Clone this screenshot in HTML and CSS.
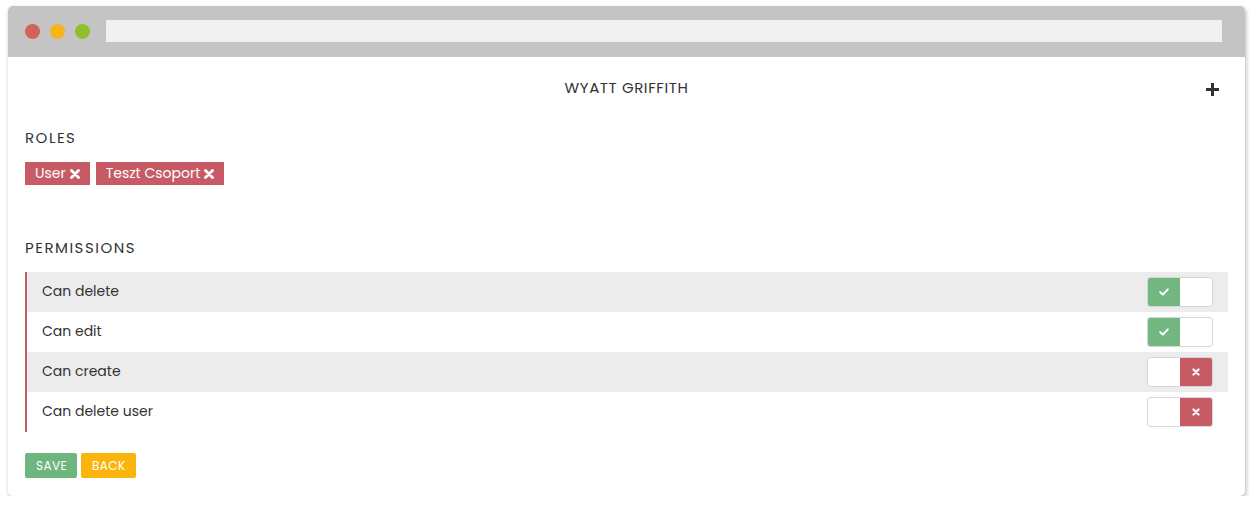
FILE: index.html
```html
<!DOCTYPE html>
<html>
<head>
<meta charset="utf-8">
<link rel="stylesheet" href="styles.css">
</head>
<body>
<div class="window">
  <div class="titlebar">
    <div class="dots">
      <span class="dot red"></span>
      <span class="dot yellow"></span>
      <span class="dot green"></span>
    </div>
    <div class="address"></div>
  </div>
  <div class="content">
    <div class="header">
      <h1 class="name">WYATT GRIFFITH</h1>
      <svg class="plus" width="13" height="13" viewBox="0 0 13 13"><path d="M5 0h3v5h5v3H8v5H5V8H0V5h5z" fill="#333"/></svg>
    </div>
    <h2 class="section roles-title">ROLES</h2>
    <div class="tags">
      <span class="tag">User <svg class="x" width="10" height="10" viewBox="0 0 10 10"><path d="M1.5 1.5l7 7M8.5 1.5l-7 7" stroke="#fff" stroke-width="2.8" stroke-linecap="round"/></svg></span>
      <span class="tag">Teszt Csoport <svg class="x" width="10" height="10" viewBox="0 0 10 10"><path d="M1.5 1.5l7 7M8.5 1.5l-7 7" stroke="#fff" stroke-width="2.8" stroke-linecap="round"/></svg></span>
    </div>
    <h2 class="section perms-title">PERMISSIONS</h2>
    <div class="perms">
      <div class="row shaded"><span>Can delete</span>
        <div class="toggle on"><span class="knob"><svg width="10" height="8" viewBox="0 0 10 8"><path d="M1.2 4.2l2.6 2.4L8.8 1.4" fill="none" stroke="#fff" stroke-width="2" stroke-linecap="round" stroke-linejoin="round"/></svg></span><span class="blank"></span></div>
      </div>
      <div class="row"><span>Can edit</span>
        <div class="toggle on"><span class="knob"><svg width="10" height="8" viewBox="0 0 10 8"><path d="M1.2 4.2l2.6 2.4L8.8 1.4" fill="none" stroke="#fff" stroke-width="2" stroke-linecap="round" stroke-linejoin="round"/></svg></span><span class="blank"></span></div>
      </div>
      <div class="row shaded"><span>Can create</span>
        <div class="toggle off"><span class="blank"></span><span class="knob"><svg width="8" height="8" viewBox="0 0 8 8"><path d="M1.5 1.5l5 5M6.5 1.5l-5 5" stroke="#fff" stroke-width="2.2" stroke-linecap="round"/></svg></span></div>
      </div>
      <div class="row"><span>Can delete user</span>
        <div class="toggle off"><span class="blank"></span><span class="knob"><svg width="8" height="8" viewBox="0 0 8 8"><path d="M1.5 1.5l5 5M6.5 1.5l-5 5" stroke="#fff" stroke-width="2.2" stroke-linecap="round"/></svg></span></div>
      </div>
    </div>
    <div class="actions">
      <button class="btn save">SAVE</button>
      <button class="btn back">BACK</button>
    </div>
  </div>
</div>
</body>
</html>
```
FILE: styles.css
```css
* { box-sizing: border-box; }
html, body { margin: 0; padding: 0; background: #fff; }
body {
  font-family: "Poppins", "Lato", "Noto Sans", sans-serif;
  color: #333;
  padding: 6px 0 0 8px;
}
.window {
  width: 1237px;
  height: 490px;
  border-radius: 5px;
  background: #fff;
  box-shadow: 1px 2px 4px rgba(0,0,0,0.3);
  overflow: hidden;
}
.titlebar {
  height: 51px;
  background: #c4c4c4;
  display: flex;
  align-items: flex-start;
  padding: 14px 0 0 17px;
}
.dots { display: flex; gap: 10px; padding-top: 4px; }
.dot { width: 15px; height: 15px; border-radius: 50%; display: block; }
.dot.red { background: #d2625c; }
.dot.yellow { background: #f5b41a; }
.dot.green { background: #8ec02b; }
.address {
  margin-left: 16px;
  width: 1116px;
  height: 22px;
  background: #f1f1f1;
}
.content { padding: 0 17px; }
.header {
  position: relative;
  height: 60px;
  display: flex;
  justify-content: center;
  align-items: center;
}
.name {
  margin: 0;
  font-size: 15px;
  font-weight: 400;
  letter-spacing: 0.6px;
  color: #333;
}
.plus { position: absolute; right: 9px; top: 26px; }
.section {
  margin: 0;
  font-size: 15px;
  font-weight: 400;
  letter-spacing: 1.5px;
  color: #333;
}
.roles-title { padding-top: 9px; height: 45px; }
.tags { display: flex; gap: 6px; }
.tag {
  background: #c65b66;
  color: #fff;
  font-size: 14px;
  height: 23px;
  line-height: 23px;
  padding: 0 10px;
  display: inline-flex;
  align-items: center;
  gap: 4px;
}
.perms-title { margin-top: 51px; height: 36px; padding-top: 0; }
.perms { border-left: 2px solid #c65b66; }
.row {
  height: 40px;
  display: flex;
  align-items: center;
  justify-content: space-between;
  padding: 0 15px 1px 15px;
  font-size: 14px;
  color: #333;
}
.row.shaded { background: #ececec; }
.toggle {
  width: 66px;
  height: 30px;
  border: 1px solid #d6d6d6;
  border-radius: 3px;
  background: #fff;
  display: flex;
  overflow: hidden;
}
.toggle .knob, .toggle .blank { flex: 1; display: flex; align-items: center; justify-content: center; }
.toggle.on .knob { background: #72b781; }
.toggle.off .knob { background: #c65b66; }
.actions { display: flex; gap: 4px; margin-top: 21px; }
.btn {
  border: none;
  border-radius: 2px;
  color: #fff;
  font-family: inherit;
  font-size: 12px;
  letter-spacing: 0.4px;
  height: 25px;
  padding: 0 11px;
}
.btn.save { background: #6fb67e; width: 52px; }
.btn.back { background: #fbb40b; width: 55px; }
```
